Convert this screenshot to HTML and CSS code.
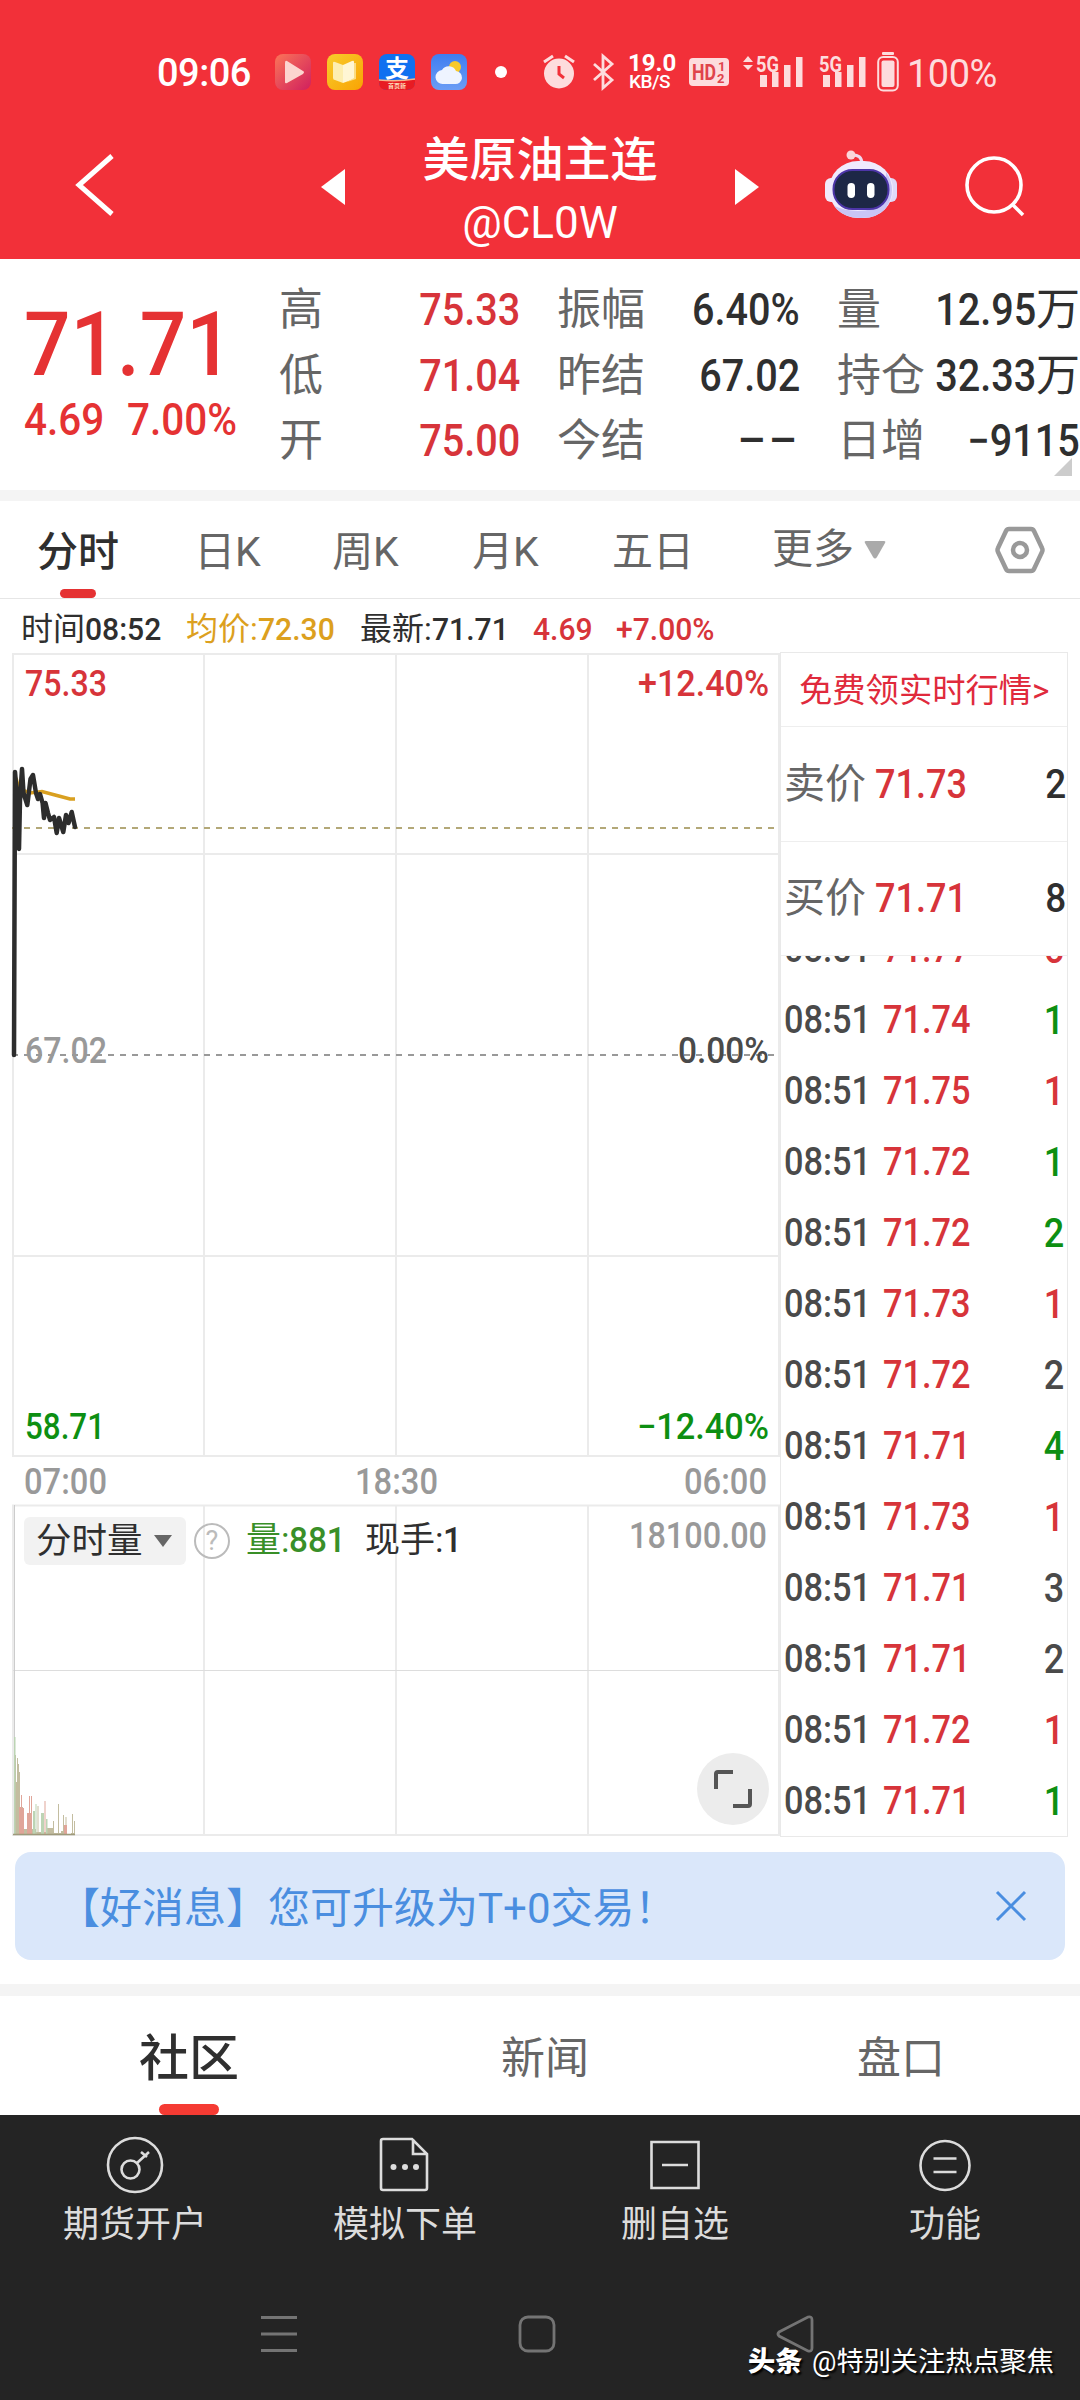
FILE: index.html
```html
<!DOCTYPE html>
<html lang="zh-CN">
<head>
    <meta charset="utf-8">
    <title>美原油主连</title>
    <link rel="stylesheet" href="styles.css">
</head>
<body>
<div class="phone">
    <header class="top">
        <div class="status">
            <span class="clock">09:06</span>
            <svg class="app" viewBox="0 0 36 36">
                <defs>
                    <linearGradient id="gVideo" x1="0" y1="0" x2="1" y2="1"><stop offset="0" stop-color="#fb7558"/><stop offset="1" stop-color="#d01f5e"/></linearGradient>
                    <linearGradient id="gBook" x1="0" y1="0" x2="1" y2="1"><stop offset="0" stop-color="#f8cc2c"/><stop offset="1" stop-color="#f9a303"/></linearGradient>
                    <linearGradient id="gSky" x1="0" y1="0" x2="0" y2="1"><stop offset="0" stop-color="#3f7df0"/><stop offset="1" stop-color="#6b9df5"/></linearGradient>
                </defs>
                <rect width="36" height="36" rx="8" fill="url(#gVideo)"/>
                <path d="M10 9v19q0 2 2 1l16-9q2-2 0-3L12 7q-2-1-2 2z" fill="#fcd5cf"/>
            </svg>
            <svg class="app" viewBox="0 0 36 36">
                <rect width="36" height="36" rx="8" fill="url(#gBook)"/>
                <path d="M6 9q0-2 2-1l8 3v18l-8-3q-2 0-2-2z" fill="#fdeeb0"/>
                <path d="M16 11l9-4q2-1 2 1v17l-11 4z" fill="#fff6d4"/>
                <path d="M27 9h2v16l-9 3 7-4z" fill="#fbdc83"/>
            </svg>
            <svg class="app" viewBox="0 0 36 36">
                <rect width="36" height="36" rx="8" fill="#1070f0"/>
                <path d="M0 26q18 2 36-1v3q0 8-8 8H8q-8 0-8-8z" fill="#e81b23"/>
                <path d="M0 26q18 2 36-1" fill="none" stroke="#f7b48c" stroke-width="1.5"/>
                <text x="18" y="23" class="ali">支</text>
                <text x="18" y="33.500" class="ali-tag">首页新</text>
            </svg>
            <svg class="app" viewBox="0 0 36 36">
                <rect width="36" height="36" rx="8" fill="url(#gSky)"/>
                <circle cx="24" cy="13" r="6" fill="#f7c928"/>
                <path d="M12 30a7 7 0 0 1-1-14 8 8 0 0 1 14 1 6.500 6.500 0 0 1-1 13z" fill="#eef4ff"/>
            </svg>
            <i class="dot"></i>
            <svg class="alarm" viewBox="0 0 32 36" fill="none" stroke="#fddcdd" stroke-width="3">
                <circle cx="16" cy="19.500" r="15" fill="#fddcdd" stroke="none"/>
                <path d="M1 8l9-6M31 8l-9-6"/>
                <path d="M16 12v8l5 4" stroke="#f23039"/>
            </svg>
            <svg class="bt" viewBox="0 0 22 36" fill="none" stroke="#fddcdd" stroke-width="2.800">
                <path d="M1 10l18 16-9 8V2l9 8L1 26"/>
            </svg>
            <span class="speed"><b>19.0</b><small>KB/S</small></span>
            <svg class="hd" viewBox="0 0 40 28">
                <rect width="40" height="28" rx="4" fill="#fddcdd"/>
                <text x="3" y="22" class="hd-t" textLength="24" lengthAdjust="spacingAndGlyphs">HD</text>
                <text x="29" y="13" class="hd-s">1</text>
                <text x="28" y="25" class="hd-s">2</text>
            </svg>
            <svg class="sig1" viewBox="0 0 62 34" fill="#fddcdd">
                <path d="M0 7l5-6 5 6zM0 10l5 5 5-5z"/>
                <text x="13" y="17" class="g5" textLength="23" lengthAdjust="spacingAndGlyphs">5G</text>
                <path d="M17 20h7v12h-7zM29 17h6.500v15H29zM41 10h6.500v22H41zM53 2h6.500v30H53z"/>
            </svg>
            <svg class="sig2" viewBox="0 0 50 34" fill="#fddcdd">
                <text x="0" y="17" class="g5" textLength="23" lengthAdjust="spacingAndGlyphs">5G</text>
                <path d="M4 20h7v12H4zM16 17h6.500v15H16zM28 10h6.500v22H28zM40 2h6.500v30H40z"/>
            </svg>
            <svg class="bat" viewBox="0 0 22 40">
                <rect x="5" width="12" height="3" rx="1" fill="#fddcdd"/>
                <rect x="1.200" y="5" width="19.600" height="33.500" rx="5" fill="none" stroke="#fddcdd" stroke-width="2"/>
                <rect x="4.500" y="8.500" width="13" height="26.500" rx="2" fill="#fddcdd"/>
            </svg>
            <span class="pct">100%</span>
        </div>
        <div class="titlebar">
            <svg class="back" viewBox="0 0 40 64"><path d="M37 3L4 32l33 29" fill="none" stroke="#fff" stroke-width="5"/></svg>
            <svg class="tri prev" viewBox="0 0 24 36"><path d="M24 0v36L0 18z" fill="#fff"/></svg>
            <div class="title">
                <h1>美原油主连</h1>
                <p>@CL0W</p>
            </div>
            <svg class="tri next" viewBox="0 0 24 36"><path d="M0 0v36l24-18z" fill="#fff"/></svg>
            <svg class="robot" viewBox="0 0 74 70">
                <path d="M27 5q11-1 11 9" fill="none" stroke="#f0d9ee" stroke-width="3"/>
                <circle cx="27" cy="5" r="4.500" fill="#fbd5da"/>
                <rect x="1" y="28" width="13" height="24" rx="6" fill="#f1e9fb"/>
                <rect x="60" y="28" width="13" height="24" rx="6" fill="#dfd9f8"/>
                <rect x="5" y="11" width="64" height="57" rx="29" fill="#f0eafd"/>
                <path d="M62 22q12 18 0 36-8 10-25 10-18 0-27-12 20 8 38 3 14-10 14-37z" fill="#c9c5f5"/>
                <rect x="9.500" y="20" width="55" height="39" rx="19" fill="#1d2746" stroke="#4d35a8" stroke-width="2"/>
                <rect x="23.500" y="33" width="7.500" height="15" rx="3.700" fill="#fff"/>
                <rect x="43" y="33" width="7.500" height="15" rx="3.700" fill="#fff"/>
            </svg>
            <svg class="search" viewBox="0 0 60 62" fill="none" stroke="#fff" stroke-width="3.600">
                <circle cx="29" cy="30" r="27"/><path d="M47 49l11 11"/>
            </svg>
        </div>
    </header>

    <section class="quote">
        <div class="last">
            <div class="price"><span class="num">71.71</span></div>
            <div class="chg"><span class="num">4.69</span><span class="num">7.00%</span></div>
        </div>
        <dl class="stats">
            <dt>高</dt><dd class="red"><span class="num r">75.33</span></dd>
            <dt>振幅</dt><dd><span class="num r">6.40%</span></dd>
            <dt>量</dt><dd><span class="num r">12.95</span>万</dd>
            <dt>低</dt><dd class="red"><span class="num r">71.04</span></dd>
            <dt>昨结</dt><dd><span class="num r">67.02</span></dd>
            <dt>持仓</dt><dd><span class="num r">32.33</span>万</dd>
            <dt>开</dt><dd class="red"><span class="num r">75.00</span></dd>
            <dt>今结</dt><dd class="none">––</dd>
            <dt>日增</dt><dd><span class="num r">−9115</span></dd>
        </dl>
        <svg class="corner" viewBox="0 0 18 18"><path d="M18 0v18H0z" fill="#ccc"/></svg>
    </section>

    <nav class="periods">
        <a class="on">分时</a><a>日K</a><a>周K</a><a>月K</a><a>五日</a>
        <a class="more">更多<svg viewBox="0 0 22 18"><path d="M2 0h18q2 0 1 2l-8 14q-2 3-4 0L1 2q-1-2 1-2z" fill="#aaa"/></svg></a>
        <svg class="hex" viewBox="0 0 50 48" fill="none" stroke="#999" stroke-width="4.500" stroke-linejoin="round">
            <path d="M14 3h22q2 0 3 2l8 17q1 2 0 4l-8 17q-1 2-3 2H14q-2 0-3-2L3 26q-1-2 0-4l8-17q1-2 3-2z"/><circle cx="25" cy="24" r="7"/>
        </svg>
    </nav>

    <div class="info">
        <span>时间<span class="num">08:52</span></span>
        <span class="gold">均价:<span class="num">72.30</span></span>
        <span>最新:<span class="num">71.71</span></span>
        <span class="red"><span class="num">4.69</span></span>
        <span class="red"><span class="num">+7.00%</span></span>
    </div>

    <main class="board">
        <div class="chart">
            <svg class="plot" viewBox="12 652 768 1185">
                <!-- grid -->
                <g fill="none" stroke="#ebebeb" stroke-width="2">
                    <path d="M13 654H779V1456H13zM13 854H779M13 1256H779M204 654V1456M396 654V1456M588 654V1456"/>
                    <path d="M13 1505.500H779V1835H13zM204 1506V1835M396 1506V1835M588 1506V1835"/>
                    <path d="M13 1670.500H779" stroke="#ddd" stroke-width="1"/>
                    <path d="M14.500 1505V1740" stroke="#ccc" stroke-width="1"/>
                </g>
                <path d="M12 828H774" stroke="#b3a878" stroke-width="2" stroke-dasharray="6 6"/>
                <path d="M12 1055H774" stroke="#999" stroke-width="2" stroke-dasharray="6 6"/>
                <!-- average and price -->
                <path d="M16 778L19 789 30 793 42 791.500 55 795 70 799 75 799" fill="none" stroke="#d9a020" stroke-width="3.500"/>
                <path d="M14 1055L15 772 16.500 790 19 849 20 800 22 769 23.500 793 27.300 805 30.500 779 33 775 36 793 38 799 40 794 42.600 803 44 818 45.500 803 48 813 50 820 54 817 56.700 833 59 818 63.300 832 66 815 68.600 823 71.700 812 75 827" fill="none" stroke="#2d2d2d" stroke-width="4.500" stroke-linejoin="round" stroke-linecap="round"/>
                <!-- price labels -->
                <g class="lab">
                    <text x="25" y="696" class="f-red" textLength="82" lengthAdjust="spacingAndGlyphs">75.33</text>
                    <text x="25" y="1063" class="f-gray" textLength="82" lengthAdjust="spacingAndGlyphs">67.02</text>
                    <text x="25" y="1439" class="f-green" textLength="80" lengthAdjust="spacingAndGlyphs">58.71</text>
                    <text x="638" y="696" class="f-red" textLength="131" lengthAdjust="spacingAndGlyphs">+12.40%</text>
                    <text x="678" y="1063" class="f-dark" textLength="91" lengthAdjust="spacingAndGlyphs">0.00%</text>
                    <text x="637" y="1439" class="f-green" textLength="132" lengthAdjust="spacingAndGlyphs">−12.40%</text>
                    <text x="24" y="1494" class="f-gray" textLength="83" lengthAdjust="spacingAndGlyphs">07:00</text>
                    <text x="355" y="1494" class="f-gray" textLength="83" lengthAdjust="spacingAndGlyphs">18:30</text>
                    <text x="684" y="1494" class="f-gray" textLength="83" lengthAdjust="spacingAndGlyphs">06:00</text>
                    <text x="629" y="1548" class="f-gray" textLength="138" lengthAdjust="spacingAndGlyphs">18100.00</text>
                </g>
                <!-- volume -->
                <g fill="#c3bda0">
                    <path d="M14 1835V1755h2v27h1v-24h1v6h1v8h1v35h3v22h13v3h10v-4h8v5h7v-2h5v4h5v-2h4v2z"/>
                    <path d="M37.500 1835v-29h1v29zM58 1835v-31h1v31zM63 1835v-20h1v20zM65.500 1835v-18h1v18zM72 1835v-21h1v21zM74 1835v-14h1v14zM53 1835v-14h1v14z"/>
                </g>
                <path d="M14 1835V1737h1.500v98zM33 1835v-24h2v24zM35.500 1835v-31h1v31zM41 1835v-22h3v22zM46 1835v-16h1.500v16z" fill="#bcd4b4"/>
                <path d="M19 1835v-28h2v-12h1v13h2v27zM27 1835v-22h2v-17h1v17h1v-17h1v39zM44.500 1835v-34h1v34zM64 1835v-10h3v10z" fill="#e0a599"/>
                <path d="M13 1834.500H75" stroke="#9f9a7c" stroke-width="1.500"/>
            </svg>
            <div class="vol">
                <span class="pick"><span>分时量</span><svg viewBox="0 0 18 12"><path d="M0 0h18L9 12z" fill="#666"/></svg></span>
                <span class="help">?</span>
                <span class="volnum">量:<span class="num">881</span></span>
                <span>现手:<span class="num">1</span></span>
            </div>
            <div class="expand">
                <svg viewBox="0 0 38 38" fill="none" stroke="#555" stroke-width="4"><path d="M2 19V4q0-2 2-2h15M36 19v15q0 2-2 2H19"/></svg>
            </div>
        </div>

        <aside class="side">
            <div class="promo">免费领实时行情&gt;</div>
            <div class="ask"><span>卖价</span><span class="num red">71.73</span><b class="num r">2</b></div>
            <div class="ask"><span>买价</span><span class="num red">71.71</span><b class="num r">8</b></div>
            <ul class="ticks">
                <li><span class="num">08:51</span><span class="num red">71.77</span><b class="num r red">6</b></li>
                <li><span class="num">08:51</span><span class="num red">71.74</span><b class="num r green">1</b></li>
                <li><span class="num">08:51</span><span class="num red">71.75</span><b class="num r red">1</b></li>
                <li><span class="num">08:51</span><span class="num red">71.72</span><b class="num r green">1</b></li>
                <li><span class="num">08:51</span><span class="num red">71.72</span><b class="num r green">2</b></li>
                <li><span class="num">08:51</span><span class="num red">71.73</span><b class="num r red">1</b></li>
                <li><span class="num">08:51</span><span class="num red">71.72</span><b class="num r">2</b></li>
                <li><span class="num">08:51</span><span class="num red">71.71</span><b class="num r green">4</b></li>
                <li><span class="num">08:51</span><span class="num red">71.73</span><b class="num r red">1</b></li>
                <li><span class="num">08:51</span><span class="num red">71.71</span><b class="num r">3</b></li>
                <li><span class="num">08:51</span><span class="num red">71.71</span><b class="num r">2</b></li>
                <li><span class="num">08:51</span><span class="num red">71.72</span><b class="num r red">1</b></li>
                <li><span class="num">08:51</span><span class="num red">71.71</span><b class="num r green">1</b></li>
            </ul>
        </aside>
    </main>

    <div class="banner">
        <span>【好消息】您可升级为<i>T+0</i>交易！</span>
        <svg viewBox="0 0 30 30"><path d="M1 1l28 28M29 1L1 29" stroke="#4a8ee0" stroke-width="3"/></svg>
    </div>

    <nav class="tabs">
        <a class="on">社区</a><a>新闻</a><a>盘口</a>
    </nav>

    <footer class="bottom">
        <div class="actions">
            <a>
                <svg viewBox="0 0 60 60"><circle cx="30" cy="30" r="27"/><circle cx="25.500" cy="34.500" r="9"/><path d="M32 28l12-11M36 17l6 5"/></svg>
                期货开户
            </a>
            <a>
                <svg viewBox="0 0 60 60"><path d="M8 4h29l15 15v34q0 2-2 2H8q-2 0-2-2V6q0-2 2-2zM38 4v15h14"/><g fill="#dcdcdc" stroke="none"><circle cx="18.500" cy="32" r="3"/><circle cx="30" cy="32" r="3"/><circle cx="41" cy="32" r="3"/></g></svg>
                模拟下单
            </a>
            <a>
                <svg viewBox="0 0 60 60"><path d="M6.500 7h47v46h-47zM17 30h26"/></svg>
                删自选
            </a>
            <a>
                <svg viewBox="0 0 60 60"><circle cx="30" cy="30.500" r="24.500"/><path d="M18.500 23.500h23M18.500 37h23"/></svg>
                功能
            </a>
        </div>
        <div class="sysnav">
            <svg viewBox="0 0 40 40"><path d="M2 3.500h36M2 20h36M2 36.500h36"/></svg>
            <svg viewBox="0 0 40 40"><rect x="3" y="3" width="34" height="34" rx="8"/></svg>
            <svg viewBox="0 0 40 40"><path d="M4 18L33 3q4-1 4 3v28q0 4-4 3L4 22q-2-2 0-4z"/></svg>
        </div>
        <div class="mark"><b>头条</b> @特别关注热点聚焦</div>
    </footer>
</div>
</body>
</html>
```

FILE: styles.css
```css
* {
    box-sizing: border-box;
    margin: 0;
    padding: 0;
}

body {
    width: 1080px;
    background: #fff;
    color: #2f2f2f;
    font-family: Roboto, "Noto Sans CJK SC", sans-serif;
}

svg {
    display: block;
    flex: none;
    overflow: visible;
}

.phone {
    width: 1080px;
    height: 2400px;
    overflow: hidden;
    display: flex;
    flex-direction: column;
}

.phone > * {
    flex: none;
}

/* narrow digits */
.num {
    display: inline-block;
    font-weight: 500;
    transform: scaleX(0.9);
    transform-origin: left center;
}

.num.r {
    transform-origin: right center;
}

.red { color: #d7343a; }
.green { color: #0d8f12; }
.gold { color: #dca01e; }

/* header */
.top {
    height: 259px;
    background: #f23039;
    color: #fff;
}

.status {
    height: 88px;
    margin-top: 28px;
    display: flex;
    align-items: center;
    padding-left: 157px;
    white-space: nowrap;
}

.clock {
    width: 118px;
    padding-top: 2px;
    font-size: 38px;
    font-weight: 500;
    letter-spacing: -0.5px;
}

.app {
    width: 36px;
    height: 36px;
    margin-right: 16px;
}

.ali {
    font: bold 24px "Noto Sans CJK SC", sans-serif;
    fill: #fff;
    text-anchor: middle;
}

.ali-tag {
    font: bold 6px "Noto Sans CJK SC", sans-serif;
    fill: #ffd9b8;
    text-anchor: middle;
}

.dot {
    width: 12px;
    height: 12px;
    border-radius: 50%;
    background: #fff;
    margin: 0 36px 0 12px;
}

.alarm { width: 32px; height: 36px; margin-right: 18px; }
.bt { width: 22px; height: 36px; margin-right: 13px; }

.speed {
    width: 61px;
    line-height: 1;
}

.speed b {
    display: block;
    font-size: 24px;
    line-height: 20px;
}

.speed small {
    display: block;
    font-size: 19px;
    font-weight: 500;
    line-height: 18px;
    padding-left: 1px;
    letter-spacing: -0.5px;
}

.hd { width: 40px; height: 28px; margin-right: 14px; }
.hd-t { font: bold 22px Roboto, sans-serif; fill: #e0434b; }
.hd-s { font: bold 13px Roboto, sans-serif; fill: #e0434b; }
.g5 { font: bold 22px Roboto, sans-serif; }
.sig1 { width: 62px; height: 34px; margin-right: 14px; }
.sig2 { width: 50px; height: 34px; margin-right: 8px; }
.bat { width: 22px; height: 40px; margin-right: 8px; }

.pct {
    font-size: 38px;
    color: #fddcdd;
    padding-top: 4px;
    letter-spacing: -0.5px;
}

.titlebar {
    height: 143px;
    display: flex;
    align-items: center;
    padding-left: 75px;
}

.back { width: 40px; height: 64px; margin-right: 206px; margin-top: -6px; }
.tri { width: 24px; height: 36px; margin-top: -1px; }

.title {
    width: 390px;
    height: 143px;
    padding-top: 10px;
    text-align: center;
}

.title h1 {
    font-size: 47px;
    font-weight: 500;
    line-height: 67px;
}

.title p {
    font-size: 44px;
    line-height: 60px;
}

.robot { width: 74px; height: 70px; margin: -6px 0 0 65px; }
.search { width: 60px; height: 62px; margin: -3px 0 0 67px; }

/* quote block */
.quote {
    position: relative;
    height: 231px;
    display: flex;
    white-space: nowrap;
}

.last {
    width: 281px;
    padding: 36px 0 0 24px;
    color: #e53233;
}

.price {
    font-size: 89px;
    line-height: 100px;
}

.price .num { transform: scaleX(0.92); }

.chg {
    display: flex;
    font-size: 44px;
    line-height: 50px;
}

.chg .num {
    transform: scaleX(0.92);
}

.chg .num:first-child {
    width: 103px;
}

.stats {
    display: grid;
    grid-template-columns: 109px 132px 130px 150px 130px 150px;
    grid-auto-rows: 65.5px;
    margin-left: -1px;
    padding-top: 19px;
    font-size: 44px;
    line-height: 65px;
}

.stats dt {
    color: #666;
}

.stats dt:nth-of-type(3n+2) { padding-left: 37px; }
.stats dt:nth-of-type(3n) { padding-left: 37px; }

.stats dd {
    display: flex;
    justify-content: flex-end;
}

.stats dd.none {
    font-weight: 500;
    letter-spacing: 3px;
}

.corner {
    position: absolute;
    right: 8px;
    bottom: 14px;
    width: 18px;
    height: 18px;
}

/* period tabs */
.periods {
    height: 109px;
    border-top: 11px solid #f4f4f4;
    border-bottom: 1px solid #e6e6e6;
    display: grid;
    grid-template-columns: 156px 143px 133px 147px 148px 268px 50px;
    align-items: center;
    text-align: center;
    font-size: 41px;
    line-height: 103px;
    color: #666;
}

.periods a {
    height: 97px;
}

.periods .on {
    color: #2f2f2f;
    font-weight: 500;
    display: flex;
    flex-direction: column;
    align-items: center;
}

.periods .on::after {
    content: "";
    width: 36px;
    height: 9px;
    margin-top: -15px;
    border-radius: 5px;
    background: #e53233;
}

.more {
    display: flex;
    align-items: center;
    padding-left: 45px;
}

.more svg { width: 22px; height: 18px; margin-left: 10px; }
.hex { width: 50px; height: 48px; }

.info {
    height: 53px;
    display: grid;
    grid-template-columns: 165px 174px 173px 83px auto;
    padding-left: 21px;
    font-size: 32px;
    line-height: 61px;
    white-space: nowrap;
}

.info .num { transform: scaleX(0.94); }

/* chart and order side */
.board {
    height: 1185px;
    display: flex;
    padding-left: 12px;
}

.chart {
    position: relative;
    width: 768px;
}

.plot {
    width: 768px;
    height: 1185px;
}

.lab { font: 500 36px Roboto, sans-serif; }
.f-red { fill: #d7343a; }
.f-green { fill: #0d8f12; }
.f-gray { fill: #999; }
.f-dark { fill: #4a4a4a; }

.vol {
    position: absolute;
    left: 12px;
    top: 865px;
    display: flex;
    align-items: center;
    font-size: 35px;
    line-height: 48px;
    white-space: nowrap;
}

.pick {
    width: 162px;
    height: 48px;
    padding-left: 12px;
    display: flex;
    align-items: center;
    border-radius: 6px;
    background: #f2f2f2;
    font-size: 35.5px;
    line-height: 52px;
}

.pick svg { width: 18px; height: 12px; margin-left: 11px; }

.help {
    width: 36px;
    height: 36px;
    margin: 0 16px 0 8px;
    border: 2px solid #bbb;
    border-radius: 50%;
    color: #bbb;
    font-size: 27px;
    line-height: 32px;
    text-align: center;
}

.volnum {
    width: 119px;
    color: #398f28;
}

.vol .num { transform: scaleX(0.95); }

.expand {
    position: absolute;
    left: 685px;
    top: 1101px;
    width: 72px;
    height: 72px;
    border-radius: 50%;
    background: #ececec;
    display: flex;
    align-items: center;
    justify-content: center;
}

.expand svg { width: 38px; height: 38px; }

.side {
    width: 288px;
    border: 1px solid #e9e9e9;
    display: flex;
    flex-direction: column;
}

.promo {
    height: 74px;
    border-bottom: 1px solid #eee;
    color: #e02a3c;
    font-size: 33.3px;
    line-height: 76px;
    padding-left: 18px;
    white-space: nowrap;
}

.ask {
    height: 114.5px;
    border-bottom: 1px solid #eee;
    display: grid;
    grid-template-columns: 91px 1fr auto;
    align-items: center;
    padding: 0 1px 0 3px;
    font-size: 41px;
    line-height: 110px;
}

.ask span:first-child {
    color: #666;
    line-height: 106px;
}

.ask .num.red { transform: scaleX(0.88); }

.ticks {
    flex: 1;
    overflow: hidden;
    list-style: none;
    color: #4a4a4a;
}

.ticks li {
    height: 71px;
    display: grid;
    grid-template-columns: 99px 1fr auto;
    align-items: center;
    padding: 0 3px 0 3px;
    font-size: 39px;
}

.ticks li:first-child { margin-top: -43px; }
.ticks b { font-size: 41px; }
.ticks .num { transform: scaleX(0.88); }

.banner {
    height: 108px;
    margin: 15px 15px 0;
    padding: 0 39px 4px 43px;
    display: flex;
    align-items: center;
    justify-content: space-between;
    border-radius: 16px;
    background: #dae7fa;
    color: #4a8ee0;
    font-size: 42px;
    white-space: nowrap;
}

.banner i {
    font-style: normal;
    font-size: 42px;
}

.banner svg { width: 30px; height: 30px; margin-top: 3px; }

/* content tabs */
.tabs {
    margin-top: 24px;
    height: 131px;
    border-top: 12px solid #f4f4f4;
    display: grid;
    grid-template-columns: repeat(3, 356px);
    padding-left: 11px;
    text-align: center;
    font-size: 44px;
    line-height: 126px;
    color: #666;
}

.tabs .on {
    height: 119px;
    display: flex;
    flex-direction: column;
    align-items: center;
    font-size: 50px;
    font-weight: 500;
    color: #2f2f2f;
}

.tabs .on::after {
    content: "";
    width: 60px;
    height: 11px;
    margin-top: -18px;
    border-radius: 6px;
    background: #f53b33;
}

.bottom {
    position: relative;
    flex: 1 0 auto;
    background: #242424;
}

.actions {
    display: grid;
    grid-template-columns: repeat(4, 1fr);
    padding-top: 20px;
    color: #dcdcdc;
    font-size: 36px;
    line-height: 60px;
}

.actions a {
    display: flex;
    flex-direction: column;
    align-items: center;
}

.actions svg {
    width: 60px;
    height: 60px;
    fill: none;
    stroke: #dcdcdc;
    stroke-width: 2.6;
}

.sysnav {
    display: flex;
    gap: 218px;
    padding: 59px 0 0 259px;
}

.sysnav svg {
    width: 40px;
    height: 40px;
    fill: none;
    stroke: #747474;
    stroke-width: 2.8;
}

.mark {
    position: absolute;
    right: 26px;
    bottom: 20px;
    font-size: 27.2px;
    line-height: 36px;
    color: #fff;
    text-shadow: 2px 2px 2px #000;
    white-space: nowrap;
}

.mark b {
    font-weight: 900;
    margin-right: 3px;
}
```
